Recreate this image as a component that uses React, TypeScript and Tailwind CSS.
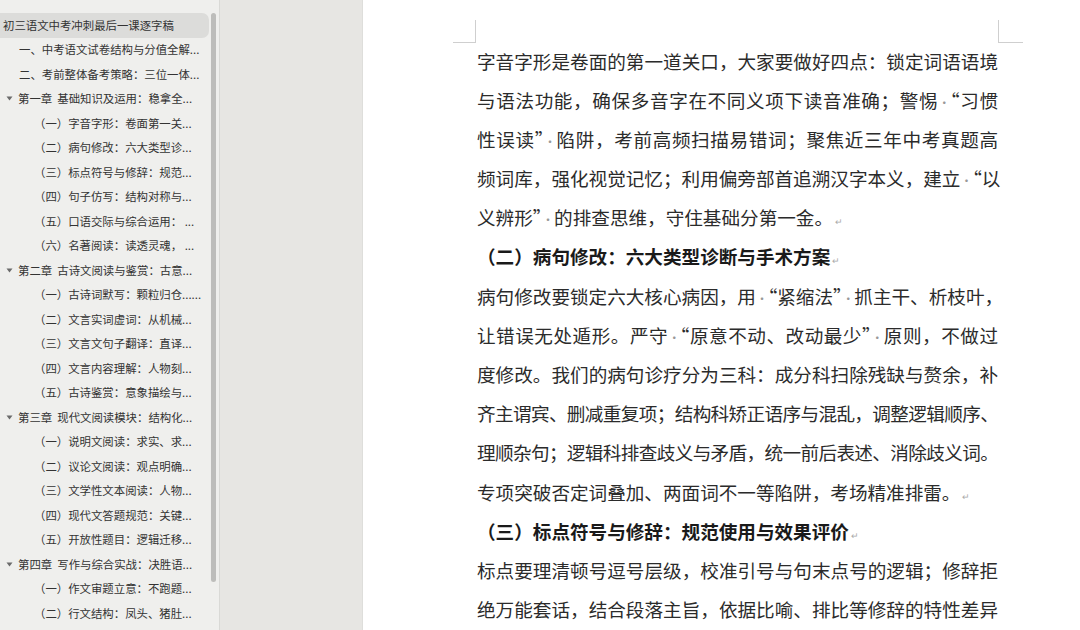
import React from "react";

type Item = { t: string; lvl: 0 | 1 | 2 | 3 };

const items: Item[] = [
  { t: "初三语文中考冲刺最后一课逐字稿", lvl: 0 },
  { t: "一、中考语文试卷结构与分值全解...", lvl: 1 },
  { t: "二、考前整体备考策略：三位一体...", lvl: 1 },
  { t: "第一章  基础知识及运用：稳拿全...", lvl: 2 },
  { t: "（一）字音字形：卷面第一关...", lvl: 3 },
  { t: "（二）病句修改：六大类型诊...", lvl: 3 },
  { t: "（三）标点符号与修辞：规范...", lvl: 3 },
  { t: "（四）句子仿写：结构对称与...", lvl: 3 },
  { t: "（五）口语交际与综合运用： ...", lvl: 3 },
  { t: "（六）名著阅读：读透灵魂， ...", lvl: 3 },
  { t: "第二章  古诗文阅读与鉴赏：古意...", lvl: 2 },
  { t: "（一）古诗词默写：颗粒归仓......", lvl: 3 },
  { t: "（二）文言实词虚词：从机械...", lvl: 3 },
  { t: "（三）文言文句子翻译：直译...", lvl: 3 },
  { t: "（四）文言内容理解：人物刻...", lvl: 3 },
  { t: "（五）古诗鉴赏：意象描绘与...", lvl: 3 },
  { t: "第三章  现代文阅读模块：结构化...", lvl: 2 },
  { t: "（一）说明文阅读：求实、求...", lvl: 3 },
  { t: "（二）议论文阅读：观点明确...", lvl: 3 },
  { t: "（三）文学性文本阅读：人物...", lvl: 3 },
  { t: "（四）现代文答题规范：关键...", lvl: 3 },
  { t: "（五）开放性题目：逻辑迁移...", lvl: 3 },
  { t: "第四章  写作与综合实战：决胜语...", lvl: 2 },
  { t: "（一）作文审题立意：不跑题...", lvl: 3 },
  { t: "（二）行文结构：凤头、猪肚...", lvl: 3 },
];

type Line = {
  parts: (string | { dot: true } | { mark: true })[];
  bold?: boolean;
  last?: boolean;
  tight?: boolean;
};

const D = { dot: true as const };
const M = { mark: true as const };

const lines: Line[] = [
  { parts: ["字音字形是卷面的第一道关口，大家要做好四点：锁定词语语境"] },
  { parts: ["与语法功能，确保多音字在不同义项下读音准确；警惕", D, "“习惯"] },
  { parts: ["性误读”", D, "陷阱，考前高频扫描易错词；聚焦近三年中考真题高"] },
  { parts: ["频词库，强化视觉记忆；利用偏旁部首追溯汉字本义，建立", D, "“以"] },
  { parts: ["义辨形”", D, "的排查思维，守住基础分第一金。", M], last: true },
  { parts: ["（二）病句修改：六大类型诊断与手术方案", M], bold: true, last: true },
  { parts: ["病句修改要锁定六大核心病因，用", D, "“紧缩法”", D, "抓主干、析枝叶，"] },
  { parts: ["让错误无处遁形。严守", D, "“原意不动、改动最少”", D, "原则，不做过"] },
  { parts: ["度修改。我们的病句诊疗分为三科：成分科扫除残缺与赘余，补"] },
  { parts: ["齐主谓宾、删减重复项；结构科矫正语序与混乱，调整逻辑顺序、"], tight: true },
  { parts: ["理顺杂句；逻辑科排查歧义与矛盾，统一前后表述、消除歧义词。"], tight: true },
  { parts: ["专项突破否定词叠加、两面词不一等陷阱，考场精准排雷。", M], last: true },
  { parts: ["（三）标点符号与修辞：规范使用与效果评价", M], bold: true, last: true },
  { parts: ["标点要理清顿号逗号层级，校准引号与句末点号的逻辑；修辞拒"] },
  { parts: ["绝万能套话，结合段落主旨，依据比喻、排比等修辞的特性差异"] },
];

function Tri() {
  return (
    <svg width="7" height="5" viewBox="0 0 7 5" className="shrink-0">
      <path d="M0.5 0.5 L6.5 0.5 L3.5 4.5 Z" fill="#6b6b6b" />
    </svg>
  );
}

export default function App() {
  return (
    <div
      className="flex h-[630px] w-[1080px] overflow-hidden bg-white"
      style={{ fontFamily: '"Noto Sans CJK SC", "Noto Sans", sans-serif' }}
    >
      {/* Sidebar */}
      <div className="flex h-full w-[220px] shrink-0 border-r border-[#d9d9d6] bg-[#efefed]">
        <div className="flex w-[209px] flex-col pt-[13px]">
          {items.map((it, i) => {
            if (it.lvl === 0)
              return (
                <div
                  key={i}
                  className="flex h-[24.5px] items-center rounded-r-[7px] bg-[#dcdcda] pl-[3px] text-[11.4px] text-[#333]"
                >
                  {it.t}
                </div>
              );
            if (it.lvl === 1)
              return (
                <div key={i} className="flex h-[24.5px] items-center whitespace-pre pl-[19px] text-[11.4px] text-[#333]">
                  {it.t}
                </div>
              );
            if (it.lvl === 2)
              return (
                <div key={i} className="flex h-[24.5px] items-center gap-[5px] whitespace-pre pl-[6px] text-[11.4px] text-[#333]">
                  <Tri />
                  <span>{it.t}</span>
                </div>
              );
            return (
              <div key={i} className="flex h-[24.5px] items-center whitespace-pre pl-[34px] text-[11.4px] text-[#333]">
                {it.t}
              </div>
            );
          })}
        </div>
        <div className="flex w-[10px] flex-col pl-[2px] pt-[13px]">
          <div className="h-[569px] w-[5px] rounded-full bg-[#bdbdbb]" />
        </div>
      </div>

      {/* Gap */}
      <div className="h-full w-[143px] shrink-0 border-r border-[#dededb] bg-[#e7e6e3]" />

      {/* Page */}
      <div className="flex h-full flex-1 flex-col bg-white">
        <div className="flex justify-between pl-[90px] pr-[57px]">
          <div className="mt-[20px] h-[23px] w-[23px] border-b border-r border-[#cfcfcf]" />
          <div className="mt-[20px] h-[23px] w-[25px] border-b border-l border-[#cfcfcf]" />
        </div>
        <div
          className="-mt-[2.5px] w-[635px] pl-[114px] text-[18.6px] text-[#2b2b2b]"
          style={{ fontFamily: '"Noto Sans CJK SC", "Liberation Serif", serif' }}
        >
          {lines.map((ln, i) => (
            <div
              key={i}
              className={
                "h-[39.2px] whitespace-nowrap leading-[39.2px] " +
                (ln.last ? "text-left " : "text-justify [text-align-last:justify] ") +
                (ln.tight ? "tracking-[-0.75px] " : "") +
                (ln.bold ? "font-bold text-[#1a1a1a]" : "")
              }
            >
              {ln.parts.map((p, j) =>
                typeof p === "string" ? (
                  <span key={j}>{p}</span>
                ) : "dot" in p ? (
                  <span key={j} className="text-[12px] font-normal text-[#999]">·</span>
                ) : (
                  <span key={j} className="ml-[2px] text-[9px] font-normal text-[#aaa]">↵</span>
                )
              )}
            </div>
          ))}
        </div>
      </div>
    </div>
  );
}
